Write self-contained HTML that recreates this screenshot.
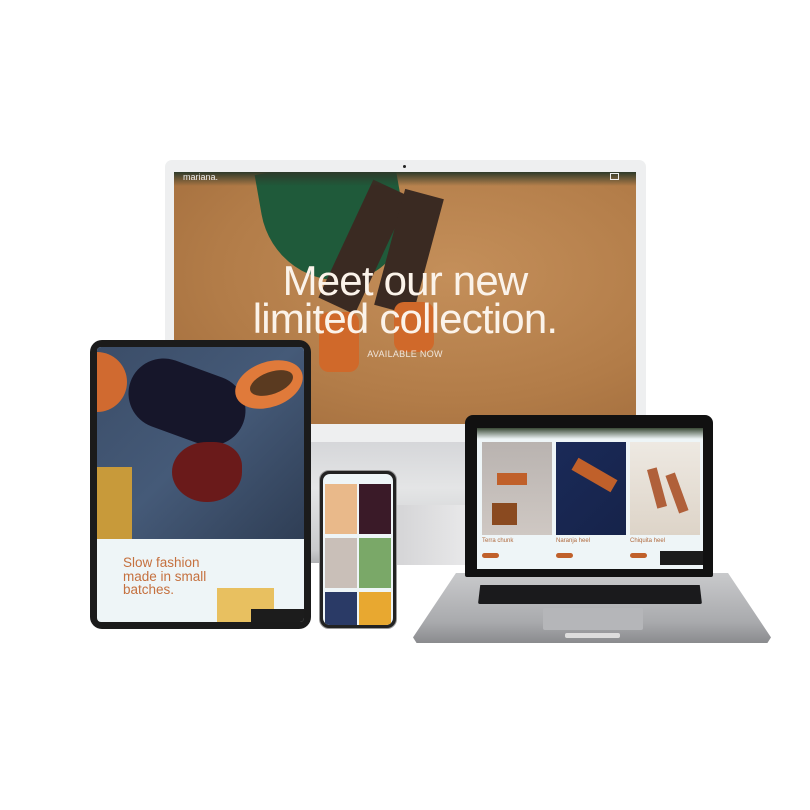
<!DOCTYPE html>
<html><head><style>
*{margin:0;padding:0;box-sizing:border-box}
body{width:810px;height:810px;background:#fff;position:relative;overflow:hidden;font-family:"Liberation Sans",sans-serif}
.a{position:absolute}
</style></head><body>
<!-- monitor stand -->
<div class="a" style="left:310px;top:438px;width:258px;height:125px;background:linear-gradient(180deg,#d4d5d8,#e4e5e6 40%,#c9cacc 90%,#b0b1b3)"></div>
<div class="a" style="left:395px;top:505px;width:170px;height:60px;background:linear-gradient(90deg,#d4d4d6,#ececed 50%,#c7c8ca)"></div>
<!-- monitor -->
<div class="a" style="left:165px;top:160px;width:481px;height:282px;background:#eeeff0;border-radius:7px"></div>
<div class="a" style="left:403px;top:165px;width:3px;height:3px;background:#222;border-radius:50%"></div>
<div class="a" style="left:174px;top:172px;width:462px;height:252px;background:radial-gradient(ellipse at 60% 40%,#c48f5a,#b27c48 60%,#a06b3b);overflow:hidden">
 <div class="a" style="left:90px;top:-10px;width:140px;height:120px;background:#1f5a3a;border-radius:0 0 60px 80px;transform:rotate(-10deg)"></div>
 <div class="a" style="left:170px;top:10px;width:40px;height:130px;background:#3a2a22;transform:rotate(25deg)"></div>
 <div class="a" style="left:215px;top:20px;width:40px;height:120px;background:#3a2a22;transform:rotate(15deg)"></div>
 <div class="a" style="left:145px;top:140px;width:40px;height:60px;background:#d0692a;border-radius:10px"></div>
 <div class="a" style="left:220px;top:130px;width:40px;height:50px;background:#d0692a;border-radius:10px"></div>
 <div class="a" style="left:0;top:0;width:462px;height:14px;background:linear-gradient(#2e3a2a,rgba(0,0,0,0))"></div>
 <div class="a" style="left:9px;top:0;color:#eee;font-size:9px">mariana.</div>
 <div class="a" style="left:436px;top:1px;width:9px;height:7px;border:1px solid #eee"></div>
 <div class="a" style="left:-20px;top:90px;width:502px;text-align:center;color:#fbf3ea;font-size:42px;line-height:38px;letter-spacing:-0.8px">Meet our new<br>limited collection.</div>
 <div class="a" style="left:0;top:177px;width:462px;text-align:center;color:#f0e6dc;font-size:9px;letter-spacing:0.3px">AVAILABLE NOW</div>
</div>
<!-- tablet -->
<div class="a" style="left:90px;top:340px;width:221px;height:289px;background:#1b1b1b;border-radius:12px"></div>
<div class="a" style="left:97px;top:347px;width:207px;height:275px;background:#eef5f7;overflow:hidden;border-radius:4px">
 <div class="a" style="left:0;top:0;width:207px;height:192px;background:linear-gradient(135deg,#3b4d68,#455a78 50%,#2f3e55)"></div>
 <div class="a" style="left:30px;top:20px;width:120px;height:70px;background:#16162a;border-radius:40px;transform:rotate(20deg)"></div>
 <div class="a" style="left:137px;top:15px;width:70px;height:45px;background:#e07a3a;border-radius:50%;transform:rotate(-20deg)"></div>
 <div class="a" style="left:152px;top:25px;width:45px;height:22px;background:#5a3a20;border-radius:50%;transform:rotate(-20deg)"></div>
 <div class="a" style="left:0;top:5px;width:30px;height:60px;background:#d06a30;border-radius:0 30px 30px 0"></div>
 <div class="a" style="left:75px;top:95px;width:70px;height:60px;background:#6a1a1a;border-radius:50% 40% 50% 50%"></div>
 <div class="a" style="left:0;top:120px;width:35px;height:72px;background:#c89a3a"></div>
 <div class="a" style="left:26px;top:209px;color:#c5703e;font-size:13.5px;line-height:13.5px">Slow fashion<br>made in small<br>batches.</div>
 <div class="a" style="left:120px;top:241px;width:57px;height:34px;background:#e8c060"></div>
 <div class="a" style="left:154px;top:262px;width:53px;height:13px;background:#1c1c1c"></div>
</div>
<!-- phone -->
<div class="a" style="left:319px;top:470px;width:78px;height:159px;background:#222;border-radius:10px;border:1px solid #999"></div>
<div class="a" style="left:323px;top:474px;width:70px;height:151px;background:#eef5f7;border-radius:7px;overflow:hidden">
 <div class="a" style="left:2px;top:10px;width:32px;height:50px;background:#e9b98a"></div>
 <div class="a" style="left:36px;top:10px;width:32px;height:50px;background:#3a1a28"></div>
 <div class="a" style="left:2px;top:64px;width:32px;height:50px;background:#c9bfb8"></div>
 <div class="a" style="left:36px;top:64px;width:32px;height:50px;background:#7aa868"></div>
 <div class="a" style="left:2px;top:118px;width:32px;height:33px;background:#2a3a66"></div>
 <div class="a" style="left:36px;top:118px;width:32px;height:33px;background:#e8a830"></div>
</div>
<!-- laptop base -->
<div class="a" style="left:413px;top:573px;width:358px;height:70px;background:linear-gradient(180deg,#c9cacc,#a9aaad 70%,#8a8b8e);clip-path:polygon(12% 0,88% 0,100% 92%,99% 100%,1% 100%,0 92%)"></div>
<div class="a" style="left:478px;top:585px;width:224px;height:19px;background:#1a1a1c;border-radius:2px;clip-path:polygon(1% 0,99% 0,100% 100%,0 100%)"></div>
<div class="a" style="left:543px;top:608px;width:100px;height:22px;background:#b5b6b9;border-radius:2px"></div>
<div class="a" style="left:565px;top:633px;width:55px;height:5px;background:#ddd;border-radius:2px"></div>
<!-- laptop lid -->
<div class="a" style="left:465px;top:415px;width:248px;height:162px;background:#111;border-radius:8px 8px 2px 2px"></div>
<div class="a" style="left:477px;top:428px;width:226px;height:141px;background:#eef5f7;overflow:hidden">
 <div class="a" style="left:0;top:0;width:226px;height:11px;background:linear-gradient(#3a4a36,#eef5f7)"></div>
 <div class="a" style="left:5px;top:14px;width:70px;height:93px;background:linear-gradient(#b9b3b0,#cfc8c3)"></div>
 <div class="a" style="left:20px;top:45px;width:30px;height:12px;background:#c0602a"></div>
 <div class="a" style="left:15px;top:75px;width:25px;height:22px;background:#8a4a20"></div>
 <div class="a" style="left:79px;top:14px;width:70px;height:93px;background:linear-gradient(135deg,#1a2a58,#16234a)"></div>
 <div class="a" style="left:95px;top:40px;width:45px;height:14px;background:#c0602a;transform:rotate(30deg)"></div>
 <div class="a" style="left:153px;top:14px;width:70px;height:93px;background:linear-gradient(#eee9e2,#ddd4c8)"></div>
 <div class="a" style="left:175px;top:40px;width:10px;height:40px;background:#b0603a;transform:rotate(-15deg)"></div>
 <div class="a" style="left:195px;top:45px;width:10px;height:40px;background:#b0603a;transform:rotate(-20deg)"></div>
 <div class="a" style="left:5px;top:110px;font-size:6px;color:#b06a3e">Terra chunk</div>
 <div class="a" style="left:79px;top:110px;font-size:6px;color:#b06a3e">Naranja heel</div>
 <div class="a" style="left:153px;top:110px;font-size:6px;color:#b06a3e">Chiquita heel</div>
 <div class="a" style="left:5px;top:125px;width:17px;height:5px;background:#c0602a;border-radius:3px"></div>
 <div class="a" style="left:79px;top:125px;width:17px;height:5px;background:#c0602a;border-radius:3px"></div>
 <div class="a" style="left:153px;top:125px;width:17px;height:5px;background:#c0602a;border-radius:3px"></div>
 <div class="a" style="left:183px;top:123px;width:43px;height:14px;background:#1c1c1c"></div>
</div>
</body></html>
